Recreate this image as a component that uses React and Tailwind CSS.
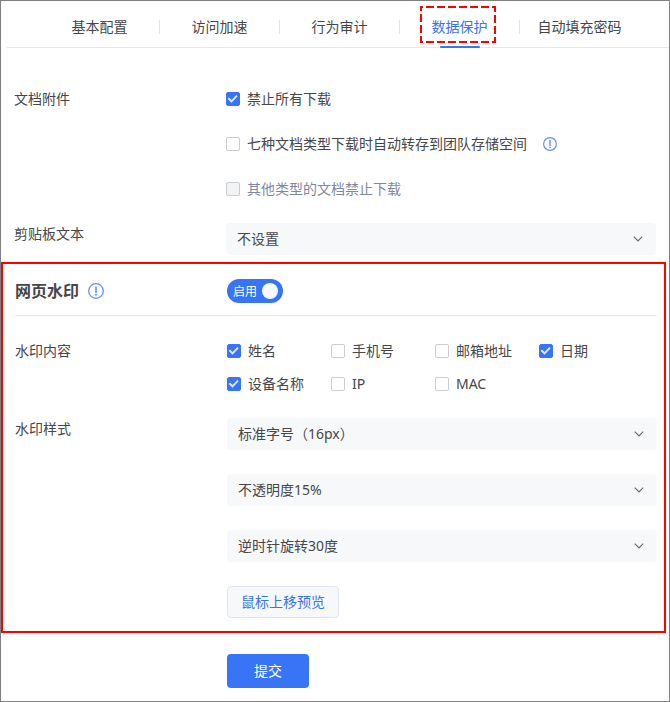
import React, { useState } from 'react';

const tabs = ['基本配置', '访问加速', '行为审计', '数据保护', '自动填充密码'];

const watermarkFields = [
  { id: 'name', label: '姓名', checked: true },
  { id: 'phone', label: '手机号', checked: false },
  { id: 'email', label: '邮箱地址', checked: false },
  { id: 'date', label: '日期', checked: true },
  { id: 'device', label: '设备名称', checked: true },
  { id: 'ip', label: 'IP', checked: false },
  { id: 'mac', label: 'MAC', checked: false },
];

const InfoIcon = ({ className }) => (
  <svg viewBox="0 0 16 16" fill="none" stroke="#5f8ff7" className={className} aria-hidden="true">
    <circle cx="8" cy="8" r="7.3" strokeWidth="1.3" />
    <path d="M8 3.4v6.8" strokeWidth="1.6" />
    <path d="M8 11v1.5" strokeWidth="1.6" />
  </svg>
);

const Checkbox = ({ id, label, defaultChecked, disabled }) => (
  <div className="flex items-center gap-[7px]">
    <span className="relative flex size-[14px] shrink-0">
      <input
        id={id}
        type="checkbox"
        defaultChecked={defaultChecked}
        disabled={disabled}
        className="peer size-[14px] appearance-none rounded-[2px] border border-[#cbccd0] bg-white checked:border-[#3875f6] checked:bg-[#3875f6] disabled:bg-[#f2f3f5]"
      />
      <svg
        viewBox="0 0 14 14"
        fill="none"
        stroke="#dfe9fe"
        strokeWidth="1.9"
        className="pointer-events-none absolute inset-0 hidden size-[14px] peer-checked:block"
        aria-hidden="true"
      >
        <path d="M2.3 6.3 5.5 9.3 11 3.6" />
      </svg>
    </span>
    <label htmlFor={id} className={disabled ? 'text-[#8087a0]' : ''}>
      {label}
    </label>
  </div>
);

const Select = ({ id, label, options }) => (
  <div className="relative">
    <select
      id={id}
      aria-label={label}
      className="block h-8 w-full appearance-none rounded bg-[#f7f8fa] pr-8 pl-[11px]"
    >
      {options.map((option) => (
        <option key={option}>{option}</option>
      ))}
    </select>
    <svg
      viewBox="0 0 10 6"
      fill="none"
      stroke="#66676b"
      strokeWidth="1.2"
      className="pointer-events-none absolute top-[13px] right-[13px] h-[6px] w-[10px]"
      aria-hidden="true"
    >
      <path d="M0.8 0.6 5 4.8 9.2 0.6" />
    </svg>
  </div>
);

const FormRow = ({ label, children }) => (
  <div className="grid grid-cols-[212px_1fr]">
    <div>{label}</div>
    <div>{children}</div>
  </div>
);

const App = () => {
  const [activeTab, setActiveTab] = useState('数据保护');
  const [enabled, setEnabled] = useState(true);

  return (
    <div className="border border-[#7f7f7f] bg-white pb-[13px] font-['Noto_Sans','Noto_Sans_CJK_SC',sans-serif] text-sm leading-[22px] text-[#45464a]">
      {/* Tabs */}
      <nav className="ml-[6px] flex border-b border-[#e5e6e8] pr-[29px] pl-[33px]">
        {tabs.map((tab) => (
          <button
            key={tab}
            type="button"
            onClick={() => setActiveTab(tab)}
            className={`group relative flex h-[46px] flex-1 items-center justify-center pt-[6px] pr-px ${
              activeTab === tab ? 'text-[#3875f6]' : ''
            }`}
          >
            {tab}
            <span className="absolute top-[19px] right-0 h-[14px] w-px bg-[#dde3ef] group-last:hidden" />
            {activeTab === tab && (
              <>
                <span className="absolute -bottom-px left-10 h-[2px] w-10 rounded-full bg-[#3875f6]" />
                <svg
                  viewBox="0 0 76 37"
                  fill="none"
                  className="pointer-events-none absolute top-[5px] left-5 h-[37px] w-[76px]"
                  aria-hidden="true"
                >
                  <rect
                    x="1"
                    y="1"
                    width="74"
                    height="35"
                    stroke="#ff0000"
                    strokeWidth="2"
                    strokeDasharray="8 3"
                    strokeDashoffset="6"
                  />
                </svg>
              </>
            )}
          </button>
        ))}
      </nav>

      {/* Documents and clipboard */}
      <div className="flex flex-col gap-[23px] pt-10 pr-[13px] pl-[13px]">
        <FormRow label="文档附件">
          <div className="flex flex-col gap-[23px]">
            <Checkbox id="forbid-all" label="禁止所有下载" defaultChecked />
            <div className="flex items-center gap-4">
              <Checkbox id="auto-save" label="七种文档类型下载时自动转存到团队存储空间" />
              <InfoIcon className="size-[14px]" />
            </div>
            <Checkbox id="forbid-other" label="其他类型的文档禁止下载" disabled />
          </div>
        </FormRow>
        <FormRow label={<label htmlFor="clipboard">剪贴板文本</label>}>
          <Select id="clipboard" label="剪贴板文本" options={['不设置']} />
        </FormRow>
      </div>

      {/* Watermark */}
      <section className="mt-[7px] mr-[3px] border-2 border-[#ff0000] pt-[15px] pr-[7px] pb-[13px] pl-3">
        <div className="grid grid-cols-[212px_1fr] items-center border-b border-[#e5e6e8] pb-3">
          <h2 className="flex items-center gap-[9px] text-base leading-6 font-bold">
            网页水印
            <InfoIcon className="size-4" />
          </h2>
          <button
            type="button"
            role="switch"
            aria-checked={enabled}
            onClick={() => setEnabled(!enabled)}
            className={`flex h-6 w-14 items-center justify-between rounded-full px-[5px] text-xs text-white ${
              enabled ? 'bg-[#3875f6]' : 'flex-row-reverse bg-[#b9bdc7]'
            }`}
          >
            <span className="px-px pt-px">{enabled ? '启用' : '停用'}</span>
            <span className="size-4 rounded-full bg-[#f7f9ff]" />
          </button>
        </div>

        <div className="flex flex-col gap-[23px] pt-6">
          <FormRow label="水印内容">
            <div className="grid grid-cols-[repeat(4,104px)] gap-y-[11px]">
              {watermarkFields.map((field) => (
                <Checkbox key={field.id} id={field.id} label={field.label} defaultChecked={field.checked} />
              ))}
            </div>
          </FormRow>
          <FormRow label="水印样式">
            <div className="flex flex-col gap-6">
              <Select id="font-size" label="字号" options={['标准字号（16px）']} />
              <Select id="opacity" label="不透明度" options={['不透明度15%']} />
              <Select id="rotation" label="旋转" options={['逆时针旋转30度']} />
              <button
                type="button"
                className="h-8 w-28 self-start rounded border border-[#dfe5f2] bg-[#f7f8fa] text-[#3875f6]"
              >
                鼠标上移预览
              </button>
            </div>
          </FormRow>
        </div>
      </section>

      <button type="button" className="mt-[21px] ml-[226px] block h-[34px] w-[82px] rounded bg-[#3875f6] text-white">
        提交
      </button>
    </div>
  );
};

export default App;
